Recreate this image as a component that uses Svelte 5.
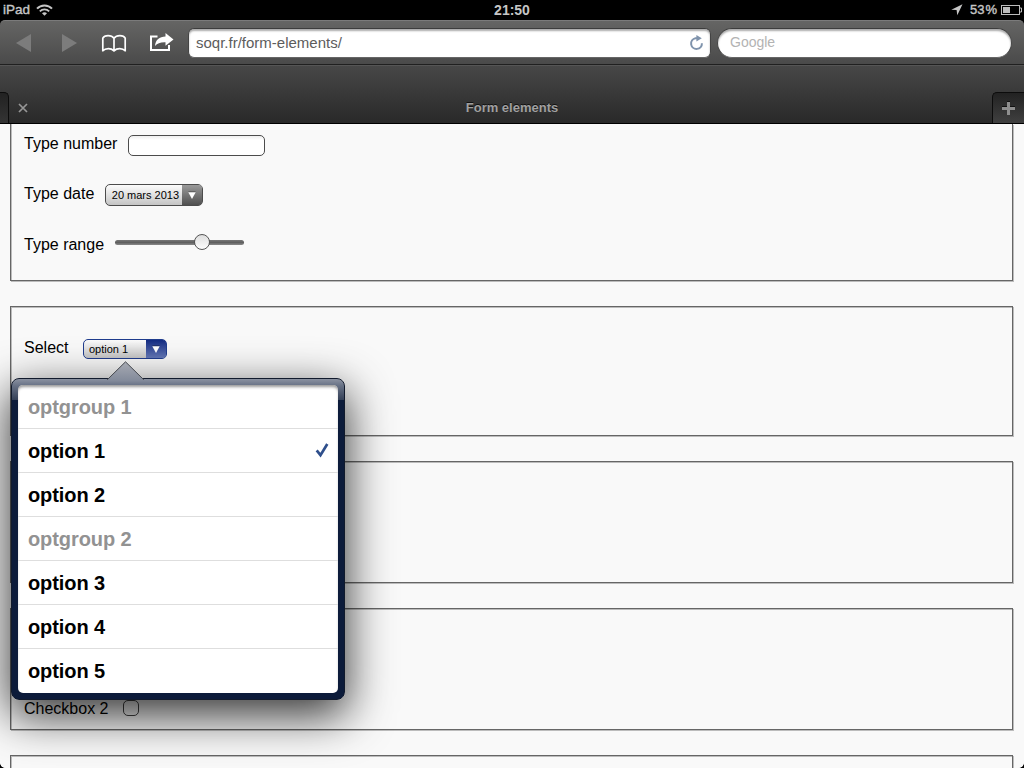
<script>
  const rows = [
    { label: 'optgroup 1', group: true },
    { label: 'option 1', selected: true },
    { label: 'option 2' },
    { label: 'optgroup 2', group: true },
    { label: 'option 3' },
    { label: 'option 4' },
    { label: 'option 5' }
  ];
</script>

<div class="screen">
  <header class="status">
    <div class="side">
      <span>iPad</span>
      <svg class="wifi" width="17" height="12" viewBox="0 0 17 12" fill="none" stroke="#c6c6c6">
        <path d="M1 4.6C5 .3 12 .3 16 4.6" stroke-width="2" />
        <path d="M3.8 7.3C6.5 4.6 10.5 4.6 13.2 7.3" stroke-width="1.8" />
        <path d="M6 9.2C7.5 7.900 9.500 7.900 11 9.200L8.500 11.700Z" fill="#c6c6c6" stroke="none" />
      </svg>
    </div>
    <span class="time">21:50</span>
    <div class="side right">
      <svg class="loc" width="12" height="12" viewBox="0 0 12 12"><path d="M11.500 .3L6.300 11.300L5.600 6.100L.3 5.800Z" fill="#c6c6c6" /></svg>
      <span class="percent">53<i>%</i></span>
      <svg width="21" height="10" viewBox="0 0 21 10">
        <rect x=".5" y=".5" width="18" height="9" fill="none" stroke="#bcbcbc" />
        <path d="M19 3h1.500v4H19" fill="none" stroke="#bcbcbc" />
        <rect x="2" y="2" width="7" height="6" fill="#bcbcbc" />
      </svg>
    </div>
  </header>

  <nav class="toolbar">
    <svg class="back" width="16" height="18" viewBox="0 0 16 18"><path d="M0 9L15 0V18Z" fill="#7c7c7c" /></svg>
    <svg class="fwd" width="16" height="18" viewBox="0 0 16 18"><path d="M15 9L0 0V18Z" fill="#7c7c7c" /></svg>
    <svg class="book" width="26" height="19" viewBox="0 0 26 19" fill="none" stroke="#fff" stroke-width="1.700">
      <path d="M1.800 17.500V4.200C3.500 .8 10.500 .8 13 4.200C15.500 .8 22.500 .8 24.200 4.200V17.500M1.800 16.800C4.500 13.800 10 13.800 13 16.800C16 13.800 21.500 13.800 24.200 16.800M13 4.200V17.500" />
    </svg>
    <svg class="share" width="24" height="20" viewBox="0 0 24 20">
      <path d="M7.500 4.500H1V18H19V13" fill="none" stroke="#fff" stroke-width="2" />
      <path d="M15.500 .9L23.500 7.500L15.500 13.800V10.200C10.500 10 7.500 11 5 14C5.400 7.700 9.500 4.500 15.500 4.400Z" fill="#fff" />
    </svg>
    <div class="url">
      <span>soqr.fr/form-elements/</span>
      <svg width="15" height="16" viewBox="0 0 15 16">
        <path d="M8.200 3.200H6.500A5.400 5.400 0 1 0 12.900 8.200" fill="none" stroke="#7f93ac" stroke-width="2" />
        <path d="M7.400 0L12.800 3.300L7.400 6.600Z" fill="#7f93ac" />
      </svg>
    </div>
    <div class="search"><span>Google</span></div>
  </nav>

  <div class="tabs">
    <div class="stub"></div>
    <svg class="close" width="10" height="10" viewBox="0 0 10 10"><path d="M1 1L9 9M9 1L1 9" stroke="#979797" stroke-width="1.700" /></svg>
    <span class="title">Form elements</span>
    <div class="add"><svg width="13" height="13" viewBox="0 0 13 13"><path d="M6.500 0V13M0 6.500H13" stroke="#8e8e8e" stroke-width="3" /></svg></div>
  </div>

  <main>
    <section class="inputs">
      <div class="field number"><label for="num">Type number</label><input id="num" type="text" /></div>
      <div class="field date">
        <span>Type date</span>
        <div class="picker"><span>20 mars 2013</span><b><svg width="8" height="7" viewBox="0 0 8 7"><path d="M.3 .3H7.700L4 7Z" fill="#fff" /></svg></b></div>
      </div>
      <div class="field range"><span>Type range</span><div class="track"><i></i></div></div>
    </section>
    <section class="choices">
      <div class="field select">
        <span>Select</span>
        <div class="picker active">
          <span>option 1</span><b><svg width="8" height="7" viewBox="0 0 8 7"><path d="M.3 .3H7.700L4 7Z" fill="#fff" /></svg></b>
          <div class="popover">
            <svg class="arrow" width="38" height="20" viewBox="0 0 38 20">
              <defs><linearGradient id="tip" x1="0" y1="0" x2="0" y2="1"><stop offset="0" stop-color="#a7aab3" /><stop offset="1" stop-color="#828a9a" /></linearGradient></defs>
              <path d="M2 18L19.500 .8L37 18V20H2Z" fill="url(#tip)" />
              <path d="M1 18.500L2 18L19.500 .8L37 18L38 18.500" fill="none" stroke="#45484e" />
            </svg>
            <ul>
              {#each rows as row}
                <li class:group={row.group}>
                  {row.label}
                  {#if row.selected}
                    <svg width="14" height="15" viewBox="0 0 14 15"><path d="M1.700 7.300L5.500 12.200L12.300 1" fill="none" stroke="#2f4f8c" stroke-width="2.700" /></svg>
                  {/if}
                </li>
              {/each}
            </ul>
          </div>
        </div>
      </div>
    </section>
    <section class="blank"></section>
    <section class="checks"><div class="field"><span>Checkbox 2</span><i class="check"></i></div></section>
    <section class="blank"></section>
  </main>
  <i class="corner left"></i>
  <i class="corner rightc"></i>
</div>

<style>
  :global(body) { margin: 0; background: #000; }
  .screen { position: relative; width: 1024px; height: 768px; overflow: hidden; display: flex; flex-direction: column; background: #000; font-family: "Liberation Sans", Arial, sans-serif; color: #000; }
  .screen * { box-sizing: border-box; }
  svg { display: block; flex: none; }

  .status { flex: none; height: 20px; display: flex; align-items: center; color: #c6c6c6; font-size: 14px; line-height: 18px; font-weight: bold; }
  .side { flex: 1; display: flex; align-items: center; gap: 6px; padding-left: 3px; height: 19px; font-size: 13.500px; font-weight: normal; -webkit-text-stroke: .4px #c6c6c6; }
  .right { justify-content: flex-end; padding: 0 2px 0 0; gap: 4px; }
  .loc { margin-right: 3px; }
  .percent i { font-style: normal; margin-left: 1px; }
  .percent { font-size: 13px; }
  .time { height: 19px; padding-right: 1px; }

  .toolbar { flex: none; height: 45px; display: flex; align-items: center; padding: 0 13px 0 16px; border-top: 1px solid #7b7b7b; border-bottom: 1px solid #202020; border-radius: 5px 5px 0 0; background: linear-gradient(#656564, #4a4a4a); }
  .fwd { margin-left: 30px; }
  .book { margin-left: 23px; margin-top: 1px; }
  .share { margin: -2px 0 0 23px; }
  .url, .search { height: 30px; background: #fff; border: 1px solid #444; border-top-color: #3d3d3d; border-bottom-color: #666; box-shadow: inset 0 2px 2px #aaa; display: flex; align-items: center; }
  .url { flex: none; width: 523px; margin: 0 6px 0 14px; padding: 0 6px 0 7px; border-radius: 6px; justify-content: space-between; color: #5c5c5c; font-size: 15px; }
  .url span, .search span { margin-top: -1px; }
  .search { flex: 1; border-radius: 15px; padding-left: 12px; color: #b3b3b3; font-size: 14px; margin-right: -1px; }

  .tabs { flex: none; height: 59px; display: flex; align-items: flex-end; border-top: 1px solid #555; border-bottom: 1px solid #000; background: linear-gradient(#474747, #292929); }
  .stub { width: 9px; height: 31px; background: linear-gradient(#222, #343434); border: 1px solid #0c0c0c; border-width: 1px 1px 0 0; border-radius: 0 5px 0 0; }
  .close { margin: 0 0 10px 9px; }
  .title { flex: 1; text-align: center; color: #a0a0a0; font-size: 13px; font-weight: bold; line-height: 16px; padding: 0 0 7px 4px; text-shadow: 0 -1px 0 #111; }
  .add { width: 32px; height: 31px; background: linear-gradient(#222, #404040); border: 1px solid #0c0c0c; border-width: 1px 0 0 1px; border-radius: 5px 0 0 0; display: flex; align-items: center; justify-content: center; }
  .add svg { margin-top: 1px; filter: drop-shadow(0 -1px 0 #111); }

  main { height: 644px; background: #f9f9f9; padding: 0 10px; display: flex; flex-direction: column; gap: 24px; font-size: 16px; line-height: 20px; }
  section { flex: none; width: 1003px; margin-bottom: 1px; padding: 0 13px; border: 1px solid #666; box-shadow: inset 1px 1px 0 #bcbcbc, 1px 1px 0 #bcbcbc; }
  .inputs { height: 157px; border-top: 0; box-shadow: inset 1px 0 0 #bcbcbc, 1px 1px 0 #bcbcbc; }
  .choices { height: 130px; padding-top: 31px; }
  .blank { height: 122px; }
  .checks { height: 122px; padding-top: 89px; }
  .field { display: flex; align-items: center; height: 22px; }
  .number { margin-top: 10px; }
  .number label { margin: -1px 11px 1px 0; }
  input { width: 137px; height: 21px; padding: 0; border: 1px solid #4c4c4c; border-radius: 5px; background: linear-gradient(#eee, #fff 4px); }
  .date { margin-top: 28px; }
  .date > span { margin: -1px 11px 1px 0; }
  .picker { position: relative; display: flex; align-items: stretch; width: 98px; height: 22px; border: 1px solid #4c4c4c; border-radius: 5px; background: linear-gradient(#fcfcfc, #c5c5c5); font-size: 11px; }
  .picker > span { flex: 1; padding-left: 5.500px; line-height: 21px; white-space: nowrap; }
  .picker > b { width: 20px; background: linear-gradient(#9a9a9a, #505050); border-radius: 0 3px 3px 0; display: flex; align-items: center; justify-content: center; }
  .picker > b svg { margin: 0 1px 0 0; filter: drop-shadow(0 -1px 0 #0005); }
  .range { margin-top: 28px; }
  .track { width: 129px; height: 5px; margin: -6px 0 0 11px; border-radius: 3px; background: linear-gradient(#777, #606060 50%, #8a8a8a); display: flex; align-items: center; padding-left: 79px; }
  .track i { width: 16px; height: 16px; flex: none; border: 1px solid #555; border-radius: 50%; background: linear-gradient(#dedede, #fcfcfc); }
  .select > span { margin: -3px 15px 0 0; }
  .active { width: 84px; height: 20px; border-color: #203d8e; }
  .active > span { line-height: 19px; padding-left: 4.500px; }
  .active > b { background: linear-gradient(#132b82, #6478b7); }
  .check { width: 16px; height: 16px; margin: -2px 0 0 14px; border: 1px solid #444; border-radius: 5px; background: #fff3; }

  .popover { position: absolute; left: -73px; top: 38px; width: 334px; height: 322px; border: 1px solid #111a2c; border-radius: 8px; background: linear-gradient(#8b92a1, #667084 7px, #344057 21px, #0c1b3a 21px); box-shadow: 0 14px 45px 2px rgba(0,0,0,.78); padding: 6px; z-index: 2; }
  .arrow { position: absolute; left: 94px; top: -18.500px; }
  ul { list-style: none; margin: 0; padding: 0; height: 308px; overflow: hidden; background: #fff; border-radius: 5px; box-shadow: inset 0 3px 3px -1px #999; font-size: 20px; font-weight: bold; line-height: 44px; }
  li { height: 44px; padding: 0 9px 0 9.500px; border-bottom: 1px solid #dedede; display: flex; justify-content: space-between; align-items: center; letter-spacing: -.08px; }
  li:last-child { border: 0; }
  .group { color: #929292; }
  .corner { position: absolute; bottom: 0; width: 5px; height: 5px; z-index: 3; }
  .left { left: 0; background: radial-gradient(circle at 100% 0, #0000 4.500px, #000 5.200px); }
  .rightc { right: 0; background: radial-gradient(circle at 0 0, #0000 4.500px, #000 5.200px); }
</style>
